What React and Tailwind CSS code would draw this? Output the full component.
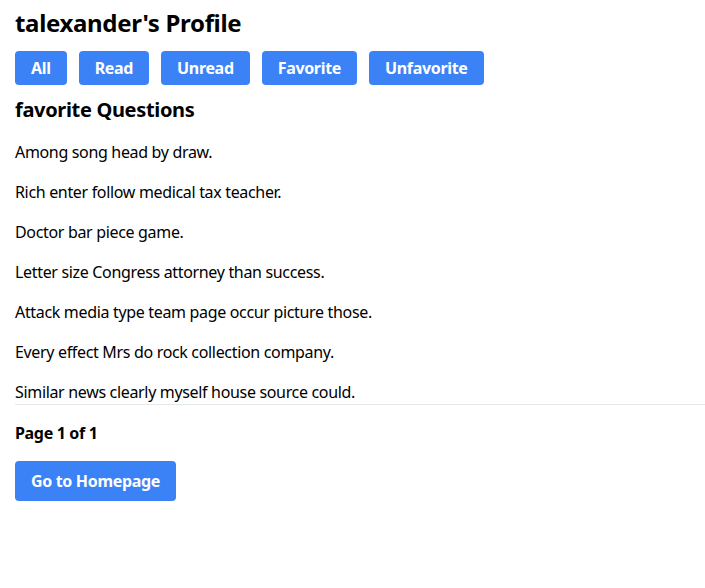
export default function App() {
  const qs = [
    "Among song head by draw.",
    "Rich enter follow medical tax teacher.",
    "Doctor bar piece game.",
    "Letter size Congress attorney than success.",
    "Attack media type team page occur picture those.",
    "Every effect Mrs do rock collection company.",
    "Similar news clearly myself house source could.",
  ];
  const btns = ["All", "Read", "Unread", "Favorite", "Unfavorite"];
  return (
    <div className="min-h-[588px] bg-white text-black pl-[15px] pt-[8px] tracking-[-0.33px]" style={{ fontFamily: '"Noto Sans", sans-serif' }}>
      <h1 className="text-[24px] font-bold leading-[30px]">talexander's Profile</h1>
      <div className="flex gap-[12px] mt-[13px]">
        {btns.map((b) => (
          <button key={b} className="bg-[#3b82f6] text-white font-bold text-[16px] h-[34px] px-4 rounded-[4px]">
            {b}
          </button>
        ))}
      </div>
      <h2 className="text-[20px] font-bold leading-[26px] mt-[12px]">favorite Questions</h2>
      <div className="mt-[17px] border-b border-[#e5e7eb] flex flex-col gap-[16px]">
        {qs.map((q) => (
          <p key={q} className="text-[16px] leading-[24px]">{q}</p>
        ))}
      </div>
      <p className="font-bold text-[16px] leading-[24px] mt-[16px]">Page 1 of 1</p>
      <button className="mt-[16px] bg-[#3b82f6] text-white font-bold text-[16px] h-[40px] px-4 rounded-[4px]">
        Go to Homepage
      </button>
    </div>
  );
}
